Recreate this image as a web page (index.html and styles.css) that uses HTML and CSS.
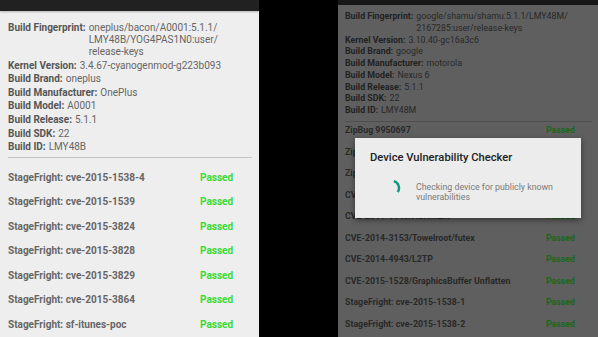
FILE: index.html
```html
<!DOCTYPE html>
<html>
<head>
<meta charset="utf-8">
<link rel="stylesheet" href="styles.css">
</head>
<body>
<div class="screen">
  <section class="phone phone-left">
    <div class="statusbar"></div>
    <div class="content">
      <div class="info">
        <div class="info-row"><span class="label">Build Fingerprint:</span><span class="value">oneplus/bacon/A0001:5.1.1/<br>LMY48B/YOG4PAS1N0:user/<br>release-keys</span></div>
        <div class="info-row"><span class="label">Kernel Version:</span><span class="value">3.4.67-cyanogenmod-g223b093</span></div>
        <div class="info-row"><span class="label">Build Brand:</span><span class="value">oneplus</span></div>
        <div class="info-row"><span class="label">Build Manufacturer:</span><span class="value">OnePlus</span></div>
        <div class="info-row"><span class="label">Build Model:</span><span class="value">A0001</span></div>
        <div class="info-row"><span class="label">Build Release:</span><span class="value">5.1.1</span></div>
        <div class="info-row"><span class="label">Build SDK:</span><span class="value">22</span></div>
        <div class="info-row"><span class="label">Build ID:</span><span class="value">LMY48B</span></div>
      </div>
      <div class="sep"></div>
      <ul class="tests">
        <li class="test"><span class="name">StageFright: cve-2015-1538-4</span><span class="status">Passed</span></li>
        <li class="test"><span class="name">StageFright: cve-2015-1539</span><span class="status">Passed</span></li>
        <li class="test"><span class="name">StageFright: cve-2015-3824</span><span class="status">Passed</span></li>
        <li class="test"><span class="name">StageFright: cve-2015-3828</span><span class="status">Passed</span></li>
        <li class="test"><span class="name">StageFright: cve-2015-3829</span><span class="status">Passed</span></li>
        <li class="test"><span class="name">StageFright: cve-2015-3864</span><span class="status">Passed</span></li>
        <li class="test"><span class="name">StageFright: sf-itunes-poc</span><span class="status">Passed</span></li>
      </ul>
    </div>
  </section>

  <section class="phone phone-right">
    <div class="statusbar"></div>
    <div class="content">
      <div class="info">
        <div class="info-row"><span class="label">Build Fingerprint:</span><span class="value">google/shamu/shamu:5.1.1/LMY48M/<br>2167285:user/release-keys</span></div>
        <div class="info-row"><span class="label">Kernel Version:</span><span class="value">3.10.40-gc16a3c6</span></div>
        <div class="info-row"><span class="label">Build Brand:</span><span class="value">google</span></div>
        <div class="info-row"><span class="label">Build Manufacturer:</span><span class="value">motorola</span></div>
        <div class="info-row"><span class="label">Build Model:</span><span class="value">Nexus 6</span></div>
        <div class="info-row"><span class="label">Build Release:</span><span class="value">5.1.1</span></div>
        <div class="info-row"><span class="label">Build SDK:</span><span class="value">22</span></div>
        <div class="info-row"><span class="label">Build ID:</span><span class="value">LMY48M</span></div>
      </div>
      <div class="sep"></div>
      <ul class="tests">
        <li class="test"><span class="name">ZipBug 9950697</span><span class="status">Passed</span></li>
        <li class="test"><span class="name">ZipBug 8219321</span><span class="status">Passed</span></li>
        <li class="test"><span class="name">ZipBug 9695860</span><span class="status">Passed</span></li>
        <li class="test"><span class="name">CVE-2013-6282/put_user get_user</span><span class="status">Passed</span></li>
        <li class="test"><span class="name">CVE-2011-1149/ASHMEM</span><span class="status">Passed</span></li>
        <li class="test"><span class="name">CVE-2014-3153/Towelroot/futex</span><span class="status">Passed</span></li>
        <li class="test"><span class="name">CVE-2014-4943/L2TP</span><span class="status">Passed</span></li>
        <li class="test"><span class="name">CVE-2015-1528/GraphicsBuffer Unflatten</span><span class="status">Passed</span></li>
        <li class="test"><span class="name">StageFright: cve-2015-1538-1</span><span class="status">Passed</span></li>
        <li class="test"><span class="name">StageFright: cve-2015-1538-2</span><span class="status">Passed</span></li>
      </ul>
    </div>
    <div class="dim"></div>
    <div class="dialog">
      <div class="dialog-title">Device Vulnerability Checker</div>
      <div class="dialog-body">
        <svg class="spinner" width="20" height="20" viewBox="0 0 20 20"><path d="M11.8 3.2 A7 7 0 0 1 15.7 14" fill="none" stroke="#12968a" stroke-width="2.4"/></svg>
        <div class="dialog-msg">Checking device for publicly known<br>vulnerabilities</div>
      </div>
    </div>
  </section>
</div>
</body>
</html>
```

FILE: styles.css
```css
* { box-sizing: border-box; }
html, body { margin: 0; padding: 0; background: #000; }
body { width: 598px; height: 337px; overflow: hidden; font-family: Roboto, "Noto Sans", sans-serif; }

.screen {
  display: flex;
  gap: 79px;
  width: 598px;
  height: 337px;
}

.phone {
  background: #eeeeee;
  height: 337px;
  overflow: hidden;
  display: flex;
  flex-direction: column;
}
.phone-left { width: 259px; }
.phone-right { flex: 1; position: relative; }

.statusbar { background: #212121; flex: none; }
.phone-left .statusbar { height: 11px; box-shadow: 0 1px 2px rgba(0,0,0,.25); }
.phone-right .statusbar { height: 5px; background: #3a3a3a; }

.content { flex: 1; }
.phone-left .content { padding: 11px 7px 0 8px; font-size: 10px; }
.phone-right .content { padding: 6px 6px 0 7px; font-size: 8.8px; }

.info-row { display: flex; gap: 3px; }
.phone-left .info-row { line-height: 12px; margin-bottom: 1.6px; }
.phone-right .info-row { line-height: 11.75px; }
.label { font-weight: 700; color: #555; white-space: nowrap; }
.value { color: #666; }

.sep { height: 1px; background: #c4c4c4; }
.phone-left .sep { margin-top: 3.5px; }
.phone-right .sep { margin-top: 4px; }

.tests { list-style: none; margin: 0; padding: 0; }
.phone-left .tests { padding-top: 8px; }
.phone-right .tests { margin-top: -1.5px; }
.test { display: flex; font-weight: 700; }
.phone-left .test { line-height: 24.5px; }
.phone-right .test { line-height: 21.5px; }
.name { flex: 1; color: #666; white-space: nowrap; }
.status { color: #35dc35; }
.phone-left .status { width: 52px; }
.phone-right .status { width: 46px; color: #48ff48; }

.dim {
  position: absolute;
  inset: 0;
  background: rgba(0, 0, 0, 0.6);
}

.dialog {
  position: absolute;
  left: 17px;
  top: 138px;
  width: 226px;
  height: 80px;
  background: #ececec;
  box-shadow: 0 2px 6px rgba(0,0,0,.45);
  padding: 13px 15px 0 15px;
}
.dialog-title {
  font-size: 11.2px;
  font-weight: 500;
  color: #212121;
  line-height: 14px;
}
.dialog-body {
  display: flex;
  align-items: flex-start;
  gap: 14px;
  margin-top: 17px;
  margin-left: 12px;
}
.spinner { flex: none; margin-top: -4px; }
.dialog-msg {
  font-size: 8.8px;
  line-height: 10px;
  color: #7a7a7a;
}
```
